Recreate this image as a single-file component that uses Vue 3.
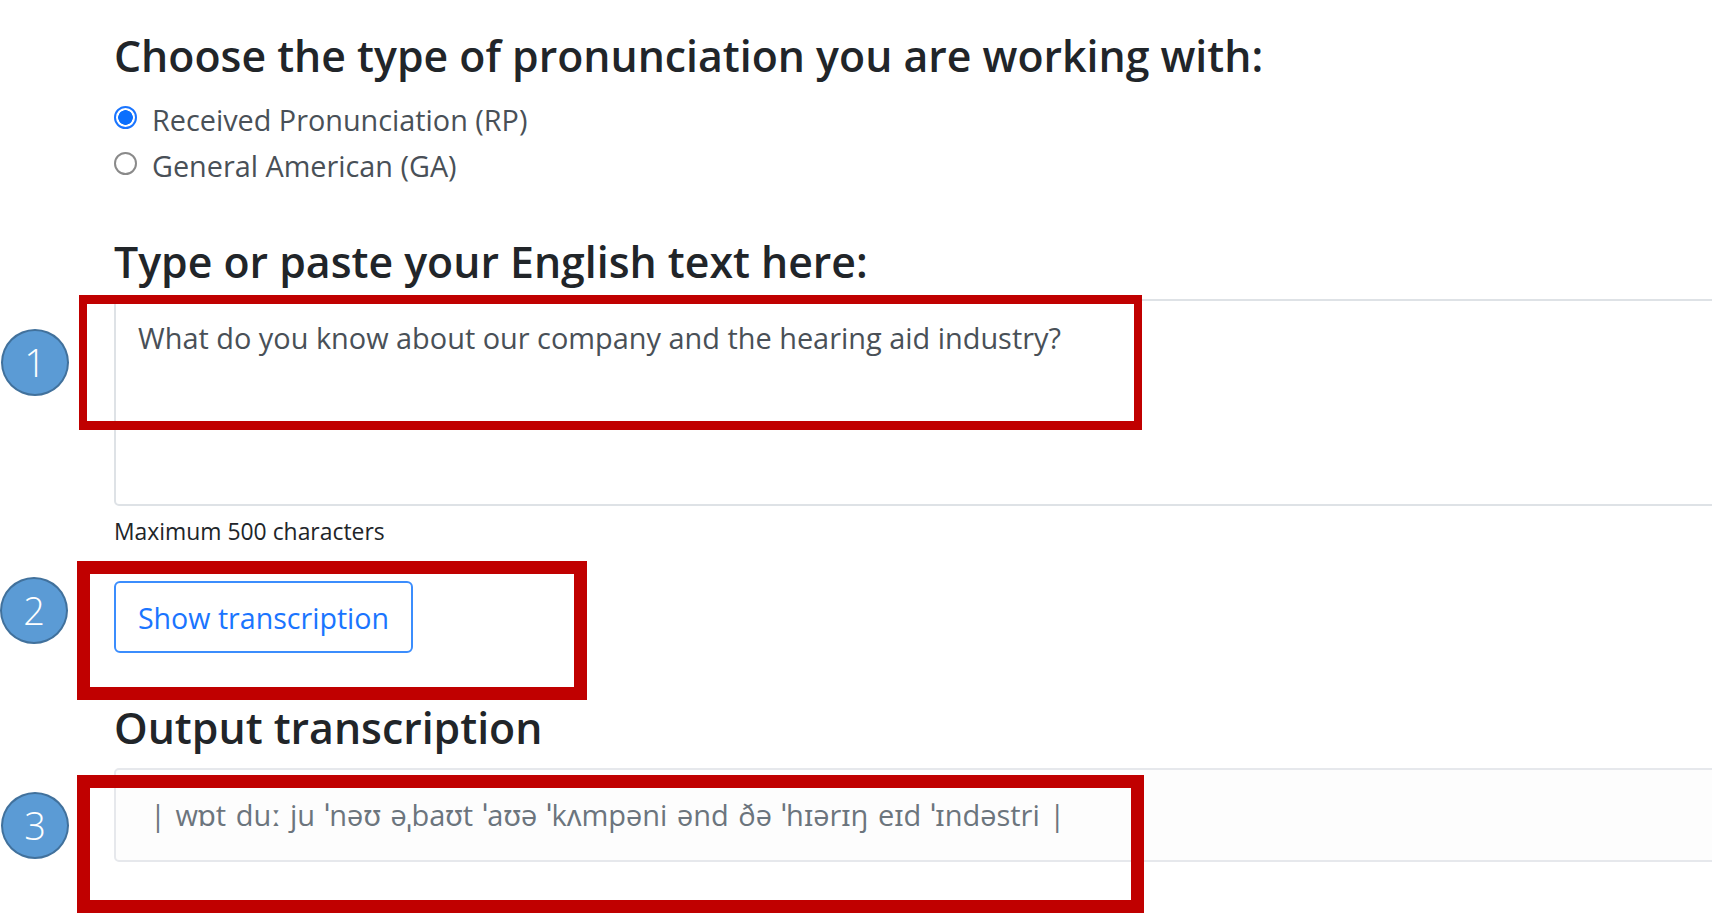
<script setup>
import { ref } from 'vue'

const accent = ref('rp')
const english = ref('What do you know about our company and the hearing aid industry?')
const ipa = '| wɒt duː ju ˈnəʊ əˌbaʊt ˈaʊə ˈkʌmpəni ənd ðə ˈhɪərɪŋ eɪd ˈɪndəstri |'

const callouts = [
  { n: 1, top: 329, left: 1 },
  { n: 2, top: 577, left: 0 },
  { n: 3, top: 792, left: 1 },
]
</script>

<template>
  <div class="page">
    <main class="form">
      <h3 class="title first">Choose the type of pronunciation you are working with:</h3>
      <label class="radio">
        <input v-model="accent" type="radio" value="rp" />
        <span>Received Pronunciation (RP)</span>
      </label>
      <label class="radio">
        <input v-model="accent" type="radio" value="ga" />
        <span>General American (GA)</span>
      </label>

      <h3 class="title second">Type or paste your English text here:</h3>
      <textarea v-model="english" class="input" spellcheck="false"></textarea>
      <small class="hint">Maximum 500 characters</small>
      <button class="btn" type="button">Show transcription</button>

      <h3 class="title third">Output transcription</h3>
      <div class="output">{{ ipa }}</div>
    </main>

    <!-- annotations drawn on top of the screenshot -->
    <div class="mark mark-1"></div>
    <div class="mark mark-2"></div>
    <div class="mark mark-3"></div>
    <div
      v-for="c in callouts"
      :key="c.n"
      class="callout"
      :style="{ top: c.top + 'px', left: c.left + 'px' }"
    >{{ c.n }}</div>
  </div>
</template>

<style scoped>
.page {
  position: relative;
  width: 1712px;
  height: 913px;
  overflow: hidden;
  background: #fff;
  font-family: "Open Sans", "Noto Sans", sans-serif;
  color: #212529;
}

.form {
  display: flex;
  flex-direction: column;
  align-items: flex-start;
  padding: 30px 0 0 114px;
  width: 1800px;
}

.title {
  margin: 0;
  font-size: 42.8px;
  line-height: 52px;
  font-weight: 600;
  color: #212529;
  white-space: nowrap;
}

.first {
  margin-bottom: 14px;
}

.second {
  margin-top: 48px;
}

.third {
  margin-top: 49px;
}

.radio {
  display: flex;
  align-items: center;
  gap: 15px;
  height: 46px;
  font-size: 28.8px;
  color: #495057;
}

.radio input {
  appearance: none;
  width: 23px;
  height: 23px;
  margin: 0 0 3px;
  border: 2px solid #8a8a8a;
  border-radius: 50%;
  background: #fff;
}

.radio input:checked {
  border-color: #1a75ff;
  background: radial-gradient(circle, #0b6ffd 0 7px, #fff 7.6px);
}

.input {
  display: block;
  width: 1700px;
  height: 207px;
  margin-top: 11px;
  padding: 19px 22px;
  box-sizing: border-box;
  border: 2px solid #dee2e6;
  border-radius: 5px;
  outline: none;
  resize: none;
  font: inherit;
  font-size: 28.9px;
  line-height: 36px;
  color: #495057;
}

.hint {
  margin-top: 11px;
  font-size: 22.9px;
  line-height: 30px;
  color: #212529;
}

.btn {
  width: 299px;
  height: 72px;
  margin-top: 34px;
  padding: 0;
  border: 2px solid #3b8dfd;
  border-radius: 6px;
  background: #fff;
  font: inherit;
  font-size: 28.6px;
  color: #1a75ff;
}

.output {
  box-sizing: border-box;
  width: 1700px;
  height: 94px;
  margin-top: 14px;
  padding: 27px 0 0 34px;
  border: 2px solid #e6e8ec;
  border-radius: 5px;
  background: #fdfdfd;
  font-size: 29px;
  line-height: 36px;
  word-spacing: 2px;
  color: #6c757d;
  white-space: nowrap;
}

.mark {
  position: absolute;
  box-sizing: border-box;
  border-style: solid;
  border-color: #c00000;
}

.mark-1 {
  left: 79px;
  top: 295px;
  width: 1063px;
  height: 135px;
  border-width: 9px 8px;
}

.mark-2 {
  left: 77px;
  top: 561px;
  width: 510px;
  height: 139px;
  border-width: 13px;
}

.mark-3 {
  left: 77px;
  top: 775px;
  width: 1067px;
  height: 138px;
  border-width: 13px;
}

.callout {
  position: absolute;
  box-sizing: border-box;
  width: 68px;
  height: 67px;
  border: 2px solid #41719c;
  border-radius: 50%;
  background: #5b9bd5;
  color: #fff;
  font-family: "Open Sans", sans-serif;
  font-size: 38px;
  font-weight: 300;
  line-height: 63px;
  text-align: center;
}
</style>

<style>
html, body {
  margin: 0;
  background: #fff;
  overflow: hidden;
}
</style>
